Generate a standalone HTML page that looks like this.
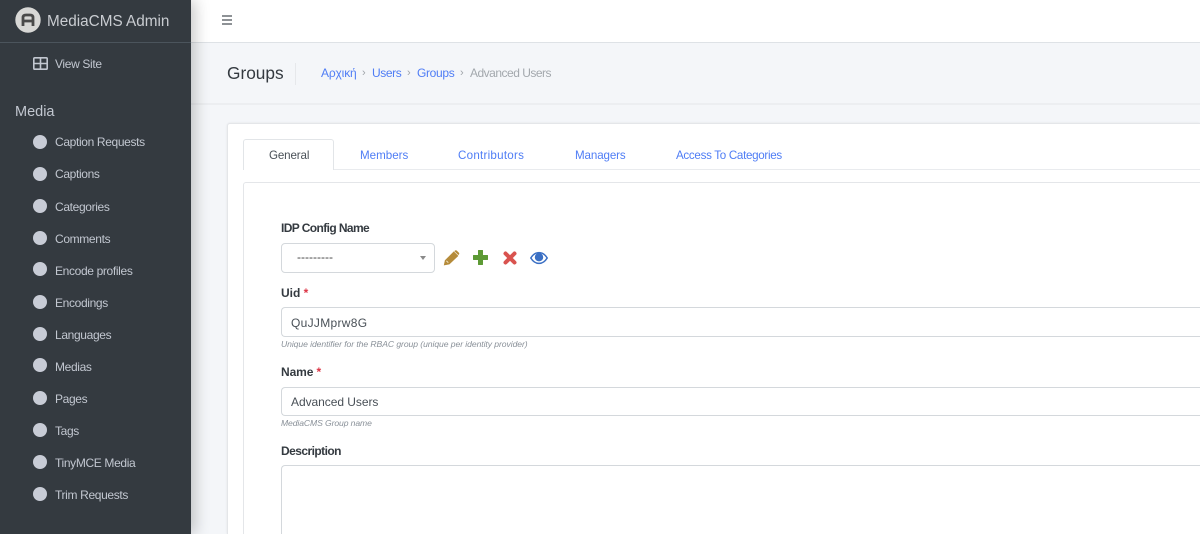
<!DOCTYPE html>
<html lang="en"><head><meta charset="utf-8"><title>Groups | MediaCMS Admin</title>
<style>
*{box-sizing:border-box}
html,body{margin:0;padding:0;width:1200px;height:534px;overflow:hidden;background:#f4f6f9;font-family:"Liberation Sans",sans-serif}
#p{position:relative;width:1200px;height:534px;overflow:hidden;background:#f4f6f9}
.t{position:absolute;white-space:nowrap;line-height:16px;height:16px}
.box{position:absolute}
.side{position:absolute;left:0;top:0;width:191px;height:534px;background:#343a40;box-shadow:4px 0 14px rgba(0,0,0,.22)}
.dot{position:absolute;left:33px;width:14px;height:14px;border-radius:50%;background:#c8ccd6}
.si{left:55px;color:#c2c7d0;font-size:12px;letter-spacing:-.35px}
.link{color:#4f7df5;font-size:12px}
.lab{color:#343a40;font-size:12px;font-weight:bold;left:281px;letter-spacing:-.5px}
.inp{position:absolute;left:281px;width:919px;background:#fff;border:1px solid #d4d8dc;border-right:0;border-radius:4px 0 0 4px}
.help{left:281px;font-size:8.6px;font-style:italic;color:#8a9199;letter-spacing:-.07px}
.req{color:#dc3545}
</style></head><body><div id="p">
<div class="box" style="left:191px;top:0;width:1009px;height:43px;background:#fff;border-bottom:1px solid #dee2e6"></div>
<svg class="box" style="left:222px;top:15px" width="10" height="10" viewBox="0 0 10 10"><path d="M0 1h10M0 5h10M0 9h10" stroke="#4b5258" stroke-width="1.2"/></svg>

<div class="box" style="left:191px;top:103px;width:1009px;height:2px;background:#eceef1"></div>
<div class="t" style="left:227px;top:61px;height:24px;line-height:24px;font-size:17.3px;color:#343a40">Groups</div>
<div class="box" style="left:295px;top:63px;width:1px;height:22px;background:#e6e8eb"></div>
<div class="t link" style="left:321px;top:65px;letter-spacing:-.15px">Αρχική</div>
<div class="t" style="left:362px;top:65px;font-size:11px;color:#a0a5aa">›</div>
<div class="t link" style="left:372px;top:65px;letter-spacing:-.4px">Users</div>
<div class="t" style="left:407px;top:65px;font-size:11px;color:#a0a5aa">›</div>
<div class="t link" style="left:417px;top:65px;letter-spacing:-.33px">Groups</div>
<div class="t" style="left:460px;top:65px;font-size:11px;color:#a0a5aa">›</div>
<div class="t" style="left:470px;top:65px;font-size:12px;color:#a3a8ad;letter-spacing:-.5px">Advanced Users</div>

<div class="box" style="left:227px;top:123px;width:973px;height:411px;background:#fff;border:1px solid #e4e6e9;border-width:1px 0 0 1px;border-radius:3px 0 0 0;box-shadow:0 0 2px rgba(0,0,0,.08)"></div>
<div class="box" style="left:243px;top:169px;width:957px;height:1px;background:#e9ebee"></div>
<div class="box" style="left:243px;top:139px;width:91px;height:31px;background:#fff;border:1px solid #e2e5e8;border-bottom:0;border-radius:3px 3px 0 0"></div>
<div class="t" style="left:269px;top:148px;font-size:11.6px;color:#495057;letter-spacing:-.14px">General</div>
<div class="t link" style="left:360px;top:148px;font-size:11.6px">Members</div>
<div class="t link" style="left:458px;top:148px;font-size:11.6px;letter-spacing:.25px">Contributors</div>
<div class="t link" style="left:575px;top:148px;font-size:11.6px;letter-spacing:-.12px">Managers</div>
<div class="t link" style="left:676px;top:148px;font-size:11.6px;letter-spacing:-.3px">Access To Categories</div>
<div class="box" style="left:243px;top:182px;width:957px;height:352px;background:#fff;border:1px solid #e4e6e9;border-width:1px 0 0 1px;border-radius:3px 0 0 0"></div>

<div class="t lab" style="top:220px;letter-spacing:-.6px">IDP Config Name</div>
<div class="inp" style="top:243px;width:154px;height:30px;border-right:1px solid #d4d8dc;border-radius:4px"></div>
<div class="t" style="left:297px;top:249px;font-size:12px;color:#444">---------</div>
<div class="box" style="left:420px;top:256px;width:0;height:0;border-left:3.5px solid transparent;border-right:3.5px solid transparent;border-top:4px solid #8a8a8a"></div>

<svg class="box" style="left:443px;top:250px" width="17" height="16" viewBox="0 0 17 16"><path d="M.8 15.400L1.900 10.300 10.800 1.400 15.400 5.900 6.400 14.400Z" fill="#b58b3a"/><path d="M11.900.6Q12.900-.2 13.800.6L15.800 2.600Q16.700 3.500 15.900 4.500L15.300 5 11.300 1.100Z" fill="#b58b3a"/><path d="M3.400 10.800L5.300 12.700" stroke="#f3e6c8" stroke-width="1"/></svg>
<svg class="box" style="left:473px;top:250px" width="15" height="15" viewBox="0 0 15 15"><path d="M5 .5Q5 0 5.500 0h4Q10 0 10 .5V5h4.500Q15 5 15 5.500v4q0 .5-.5.5H10v4.500q0 .5-.5.5h-4Q5 15 5 14.500V10H.5Q0 10 0 9.500v-4Q0 5 .5 5H5z" fill="#5d9a35"/></svg>
<svg class="box" style="left:503px;top:251px" width="14" height="14" viewBox="0 0 14 14"><path d="M2.500 2.500l9 9M11.500 2.500l-9 9" stroke="#d9534f" stroke-width="4" stroke-linecap="round"/></svg>
<svg class="box" style="left:530px;top:251px" width="18" height="14" viewBox="0 0 18 14"><path d="M.8 7C3 3.400 5.800 1.600 9 1.600S15 3.400 17.200 7C15 10.600 12.200 12.400 9 12.400S3 10.600.8 7z" fill="#fff" stroke="#3a6fc4" stroke-width="1.500"/><circle cx="9" cy="6.200" r="4.200" fill="#3a6fc4"/></svg>

<div class="t lab" style="top:285px;letter-spacing:0">Uid <span class="req">*</span></div>
<div class="inp" style="top:307px;height:30px"></div>
<div class="t" style="left:291px;top:315px;font-size:12px;color:#495057;letter-spacing:.3px">QuJJMprw8G</div>
<div class="t help" style="top:336px">Unique identifier for the RBAC group (unique per identity provider)</div>

<div class="t lab" style="top:364px;letter-spacing:-.1px">Name <span class="req">*</span></div>
<div class="inp" style="top:387px;height:29px"></div>
<div class="t" style="left:291px;top:394px;font-size:12px;color:#495057;letter-spacing:-.05px">Advanced Users</div>
<div class="t help" style="top:415px;letter-spacing:-.1px">MediaCMS Group name</div>

<div class="t lab" style="top:443px;letter-spacing:-.55px">Description</div>
<div class="inp" style="top:465px;height:69px;border-bottom:0;border-radius:4px 0 0 0"></div>

<div class="side"></div>
<div class="box" style="left:0;top:42px;width:191px;height:1px;background:#4b545c"></div>
<svg class="box" style="left:15px;top:7px" width="26" height="26" viewBox="0 0 26 26"><circle cx="13" cy="13" r="12.700" fill="#d8d8d6"/><path d="M8 19V10.500Q8 8 11 8H15Q18 8 18 10.500V19M8 14H18" fill="none" stroke="#4a4a4a" stroke-width="2.800"/></svg>
<div class="t" style="left:47px;top:12px;height:20px;line-height:20px;font-size:15.300px;color:#c9ccd1">MediaCMS Admin</div>
<svg class="box" style="left:33px;top:57px" width="15" height="13" viewBox="0 0 15 13"><rect x=".8" y=".8" width="13.400" height="11.400" rx="1" fill="none" stroke="#c2c7d0" stroke-width="1.600"/><path d="M.8 6.500h13.400M7.500.8v11.400" stroke="#c2c7d0" stroke-width="1.600"/></svg>
<div class="t si" style="top:56px">View Site</div>
<div class="t" style="left:15px;top:103px;height:18px;line-height:18px;font-size:14.500px;color:#c2c7d0">Media</div>

<div class="dot" style="top:135px"></div><div class="t si" style="top:134px">Caption Requests</div>
<div class="dot" style="top:167px"></div><div class="t si" style="top:166px">Captions</div>
<div class="dot" style="top:199px"></div><div class="t si" style="top:199px">Categories</div>
<div class="dot" style="top:231px"></div><div class="t si" style="top:231px">Comments</div>
<div class="dot" style="top:262px"></div><div class="t si" style="top:263px">Encode profiles</div>
<div class="dot" style="top:295px"></div><div class="t si" style="top:295px">Encodings</div>
<div class="dot" style="top:327px"></div><div class="t si" style="top:327px">Languages</div>
<div class="dot" style="top:358px"></div><div class="t si" style="top:359px">Medias</div>
<div class="dot" style="top:391px"></div><div class="t si" style="top:391px">Pages</div>
<div class="dot" style="top:423px"></div><div class="t si" style="top:423px">Tags</div>
<div class="dot" style="top:455px"></div><div class="t si" style="top:455px">TinyMCE Media</div>
<div class="dot" style="top:487px"></div><div class="t si" style="top:487px">Trim Requests</div>
</div></body></html>
